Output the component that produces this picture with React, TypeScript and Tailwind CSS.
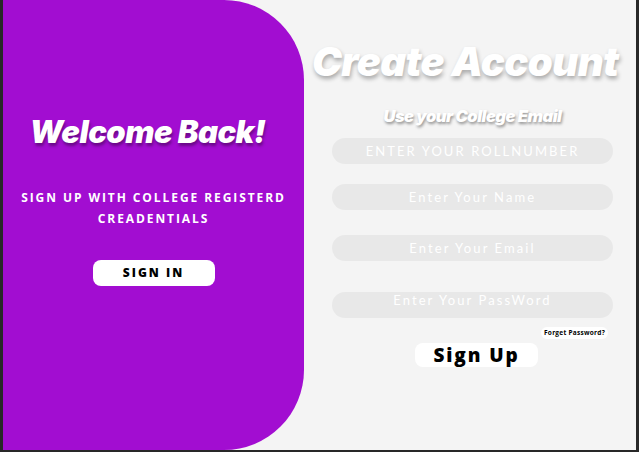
export default function App() {
  return (
    <div className="w-[639px] h-[452px] bg-[#f4f4f4] border-l-[3px] border-r-[3px] border-b-2 border-[#282828] flex overflow-hidden">
      {/* Left purple panel */}
      <div className="w-[301px] h-[450px] shrink-0 bg-[#a20dd1] rounded-r-[80px] flex flex-col items-center pt-[113px]">
        <h1 className="mr-[12px] text-white font-black italic text-[31px] leading-[38px] tracking-[-0.5px] font-['Inter',sans-serif] [text-shadow:1px_3px_3px_rgba(0,0,0,0.35)]">
          Welcome Back!
        </h1>
        <p className="mt-[36px] text-white font-bold text-[12px] leading-[21px] tracking-[0.16em] text-center font-['Open_Sans',sans-serif]">
          SIGN UP WITH COLLEGE REGISTERD
          <br />
          CREADENTIALS
        </p>
        <button className="mt-[31px] w-[122px] h-[26px] bg-white rounded-[8px] text-black font-extrabold text-[12px] tracking-[0.17em] font-['Open_Sans',sans-serif]">
          SIGN IN
        </button>
      </div>

      {/* Right form panel */}
      <div className="flex-1 flex flex-col pl-[28px] pt-[37px]">
        <h2 className="-ml-[20px] whitespace-nowrap text-white font-black italic text-[40px] leading-[50px] tracking-[-0.6px] font-['Inter',sans-serif] [text-shadow:1px_3px_4px_rgba(0,0,0,0.3)]">
          Create Account
        </h2>
        <p className="w-[281px] mt-[19px] text-center text-white font-black italic text-[16.5px] leading-[20px] tracking-[-0.5px] font-['Inter',sans-serif] [text-shadow:1px_2px_3px_rgba(0,0,0,0.4)]">
          Use your College Email
        </p>
        <input
          placeholder="ENTER YOUR ROLLNUMBER"
          className="mt-[12px] w-[281px] h-[26px] rounded-full bg-[#e8e8e8] text-center text-[13px] tracking-[0.16em] font-['Lato',sans-serif] placeholder:text-white outline-none"
        />
        <input
          placeholder="Enter Your Name"
          className="mt-[20px] w-[281px] h-[26px] rounded-full bg-[#e8e8e8] text-center text-[13px] tracking-[0.16em] font-['Lato',sans-serif] placeholder:text-white outline-none"
        />
        <input
          placeholder="Enter Your Email"
          className="mt-[25px] w-[281px] h-[26px] rounded-full bg-[#e8e8e8] text-center text-[13px] tracking-[0.16em] font-['Lato',sans-serif] placeholder:text-white outline-none"
        />
        <div className="mt-[31px] w-[281px] h-[26px] rounded-full bg-[#e8e8e8] flex justify-center pt-[1px]">
          <input
            placeholder="Enter Your PassWord"
            className="w-full h-[16px] bg-transparent text-center text-[13px] tracking-[0.16em] font-['Lato',sans-serif] placeholder:text-white outline-none"
          />
        </div>
        <div className="w-[281px] flex justify-end pr-[5px] mt-[9px]">
          <span className="bg-white rounded-full px-[3px] h-[12px] leading-[12px] text-[6.5px] font-bold tracking-[0.04em] text-black font-['Open_Sans',sans-serif]">
            Forget Password?
          </span>
        </div>
        <div className="w-[281px] flex justify-center pl-[8px] mt-[4px]">
          <button className="w-[123px] h-[24px] bg-white rounded-[8px] text-black font-extrabold text-[19px] leading-[24px] tracking-[0.1em] font-['Open_Sans',sans-serif]">
            Sign Up
          </button>
        </div>
      </div>
    </div>
  );
}
